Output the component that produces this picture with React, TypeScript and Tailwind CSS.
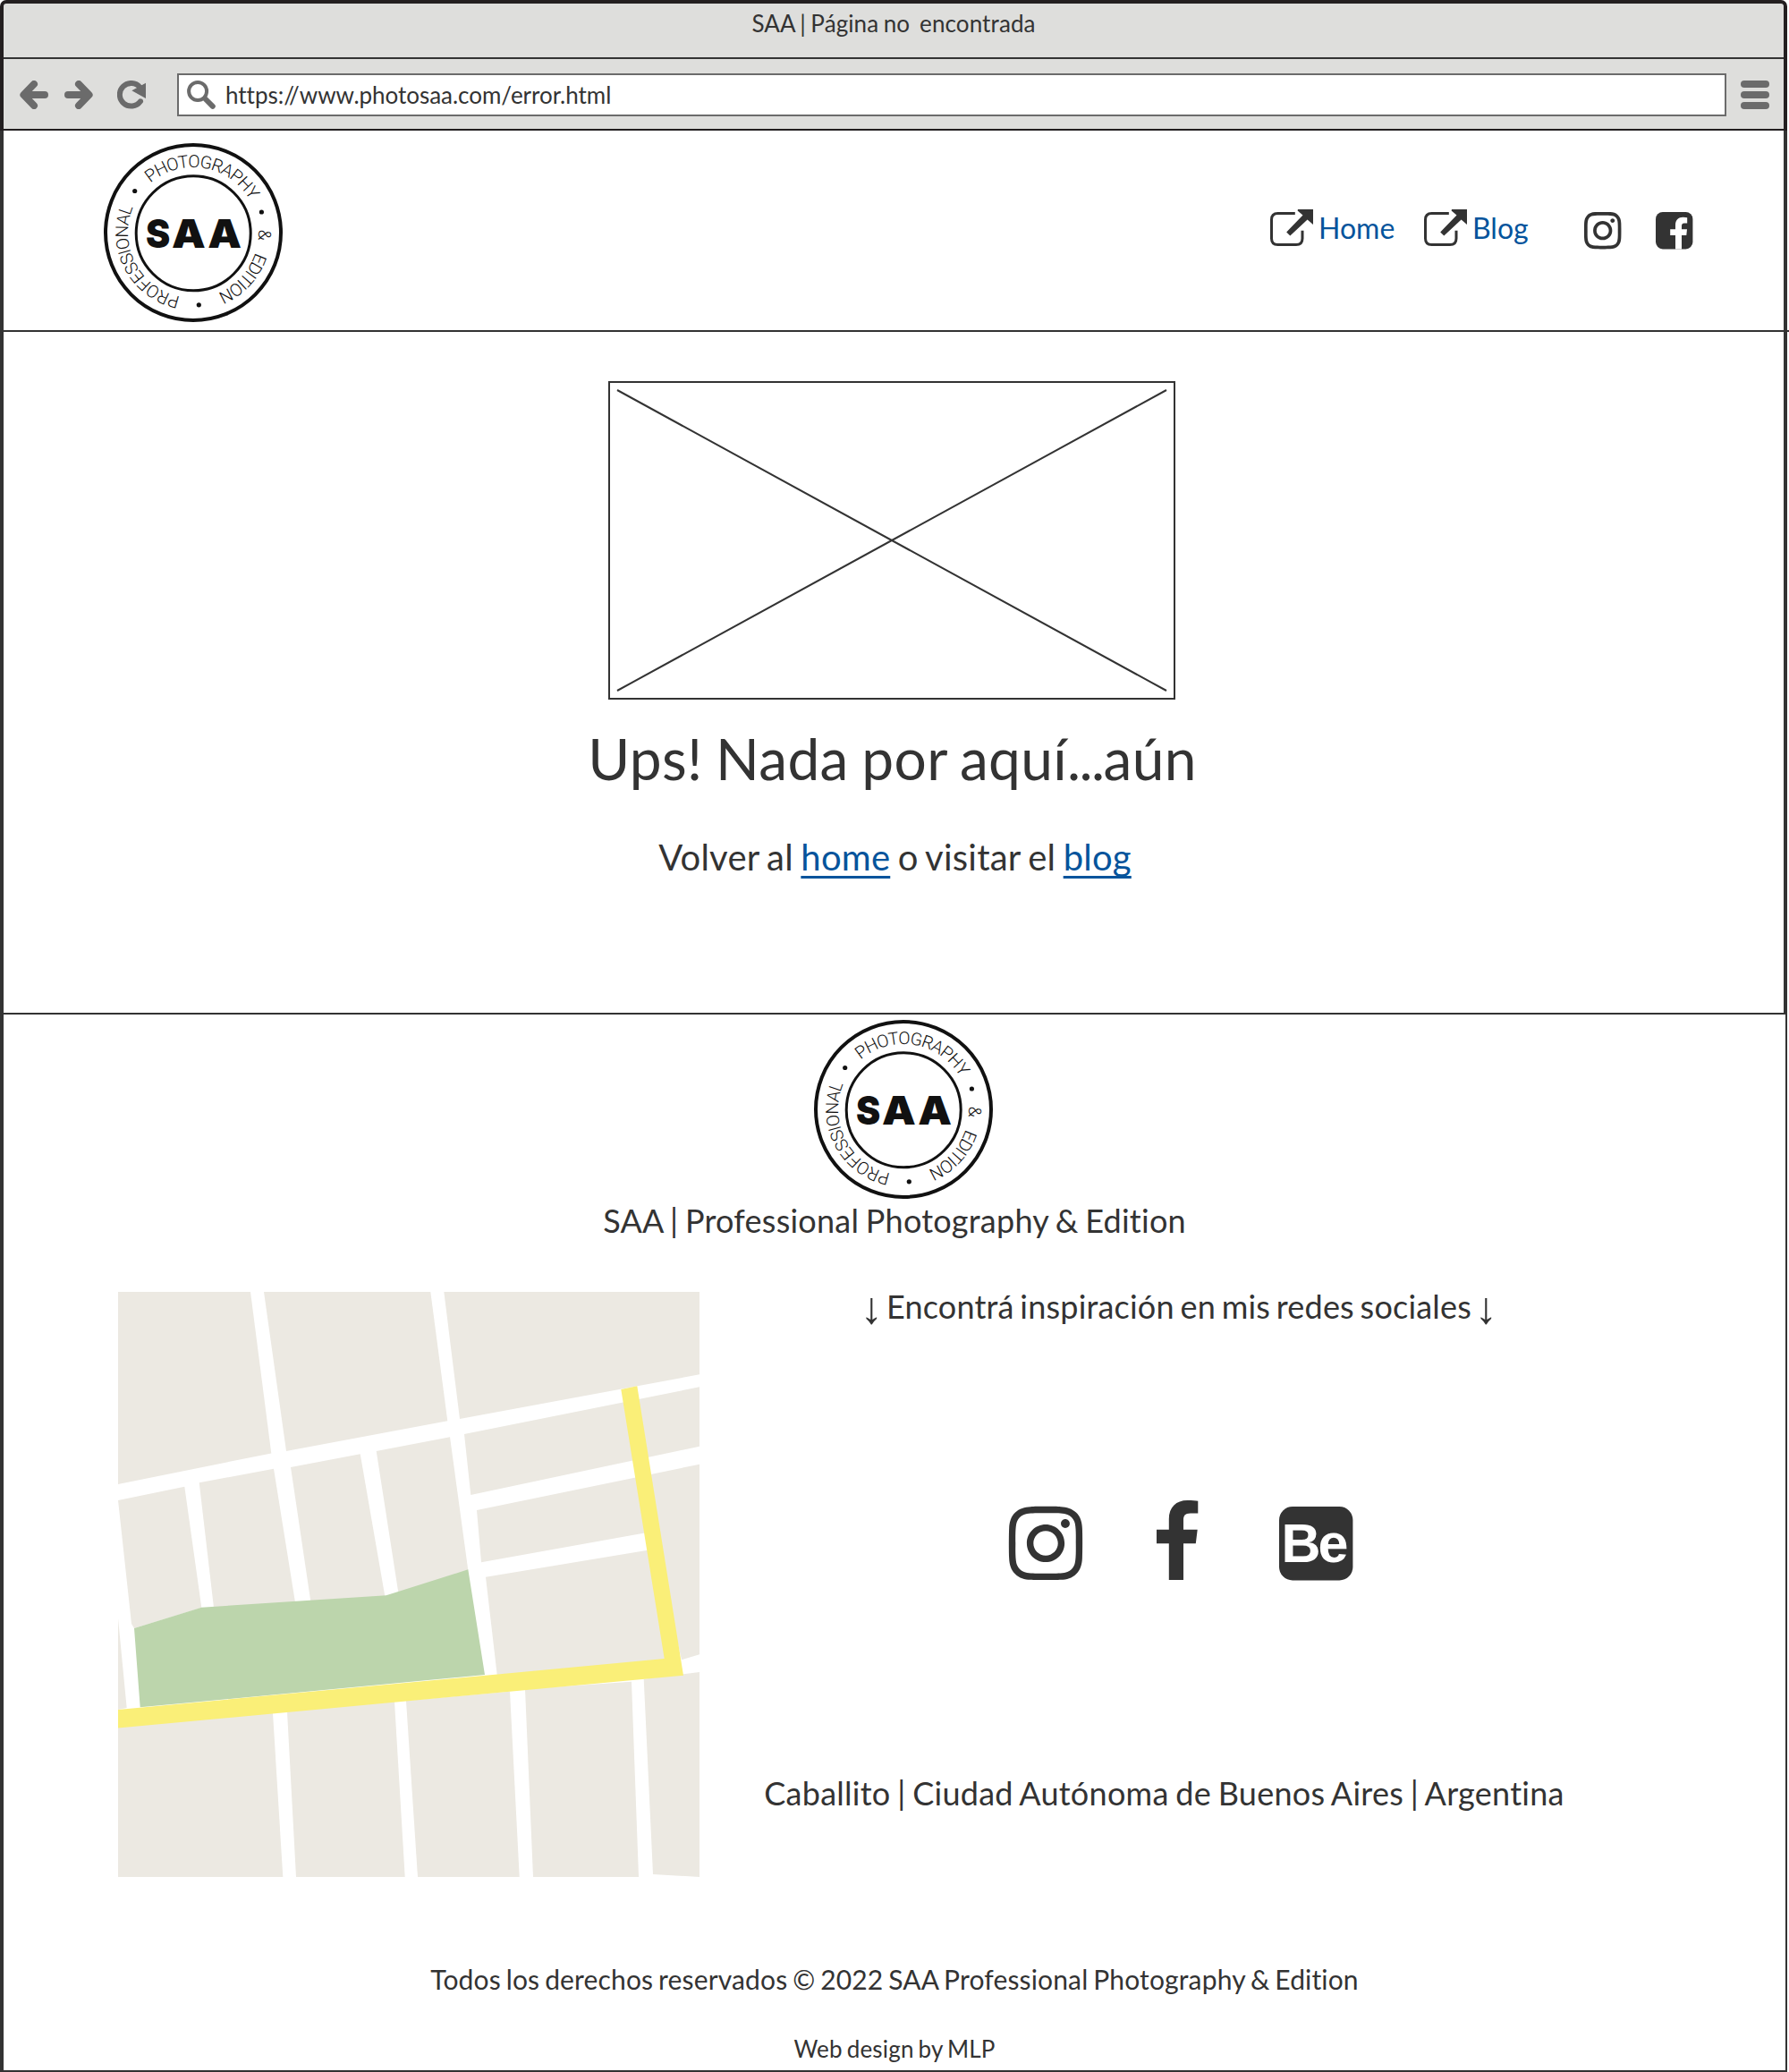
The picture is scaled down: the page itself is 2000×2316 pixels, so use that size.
import React, { useId } from "react";
import { FaInstagram } from "react-icons/fa";

function Badge() {
  const id = useId();
  const ringText = [
    { label: "PROFESSIONAL", start: 14.7, length: 129 },
    { label: "PHOTOGRAPHY", start: 177, length: 129 },
    { label: "&", start: 340, length: 11 },
    { label: "EDITION", start: 366, length: 64 },
  ];
  return (
    <svg width="200" height="200" viewBox="0 0 200 200" fill="none" className="block shrink-0">
      <circle cx="100" cy="100" r="98" stroke="#111" strokeWidth="4" />
      <circle cx="100.2" cy="100.8" r="64" stroke="#111" strokeWidth="3" />
      <path id={id} d="M100 173A73 73 0 0 1 100 27A73 73 0 0 1 100 173" />
      {ringText.map((t) => (
        <text key={t.label} fill="#111" className="font-['Roboto'] text-[19.5px] font-light">
          <textPath href={`#${id}`} startOffset={t.start} textLength={t.length} lengthAdjust="spacing">
            {t.label}
          </textPath>
        </text>
      ))}
      <circle cx="34.7" cy="53.5" r="2.6" fill="#111" />
      <circle cx="176.4" cy="77" r="2.6" fill="#111" />
      <circle cx="106.3" cy="180.8" r="2.6" fill="#111" />
      <g fill="#111" className="font-['Inter'] text-[44px] font-black">
        <text transform="translate(47 116.8) scale(0.93 1)">S</text>
        <text transform="translate(0 116.8) scale(1.08 1)" x="70.4 107.6">AA</text>
      </g>
    </svg>
  );
}

function ArrowIcon({ flip = false }: { flip?: boolean }) {
  return (
    <svg width="32" height="32" viewBox="0 0 32 32" className={flip ? "-scale-x-100" : ""}>
      <path d="M16 4L4.4 16L16 28L10 16Z" fill="#6b6b6b" />
      <path d="M16 4L4.4 16L16 28M6 16H28" fill="none" stroke="#6b6b6b" strokeWidth="8" strokeLinecap="round" strokeLinejoin="round" />
    </svg>
  );
}

function ReloadIcon() {
  return (
    <svg width="32" height="32" viewBox="0 0 32 32">
      <path d="M25.5 7.6A12.8 12.8 0 1 0 26 23.3" fill="none" stroke="#6b6b6b" strokeWidth="6" strokeLinecap="round" />
      <path d="M16.3 11.3L32 2.7V20Z" fill="#6b6b6b" />
    </svg>
  );
}

function SearchIcon() {
  return (
    <svg width="32" height="32" viewBox="0 0 32 32" fill="none" stroke="#6b6b6b">
      <circle cx="12.1" cy="12" r="10" strokeWidth="4" />
      <path d="M20.5 20.5L28.8 28.8" strokeWidth="6" strokeLinecap="round" />
    </svg>
  );
}

function ExternalIcon() {
  return (
    <svg width="49" height="42" viewBox="0 0 49 42">
      <path d="M27.8 4.6H8.5Q1.5 4.6 1.5 11.6V32.5Q1.5 39.5 8.5 39.5H29Q36 39.5 36 32.5V23.7" fill="none" stroke="#333" strokeWidth="3" />
      <path d="M31 0H48V17L41.6 11.4L22.3 29.6L18.2 25.4L36.5 6.4L30.6 1.4Z" fill="#333" />
    </svg>
  );
}

function FacebookSquare() {
  return (
    <svg width="42" height="42" viewBox="0 0 42 42">
      <rect width="41.4" height="41.4" rx="7.8" fill="#333" />
      <path d="M35.2 6.2V12.6H32C29.5 12.6 29 14 29 16V19.3H35L34.3 26H29V41.5H22V26H16.2V19.3H22V14.5C22 8.8 25.5 5.7 30.5 5.7Q33.5 5.7 35.2 6.2Z" fill="#fff" />
    </svg>
  );
}

function FacebookF() {
  return (
    <svg width="47" height="89" viewBox="0 0 47 89">
      <path d="M46.3 .7V14.5H38C31.5 14.5 30 17.5 30 22V32.8H45.7L43.8 48.2H30V89H13.8V48.2H0V32.8H13.8V21C13.8 7.5 22 0 34.3 0C39.5 0 44 .3 46.3 .7Z" fill="#333" />
    </svg>
  );
}

function BehanceSquare() {
  return (
    <svg width="83" height="83" viewBox="0 0 83 83">
      <rect width="82.4" height="82.4" rx="15" fill="#333" />
      <text x="2.4" y="62.3" textLength="75" lengthAdjust="spacing" fill="#fff" className="font-['Liberation_Sans'] text-[61px] font-bold">
        Be
      </text>
    </svg>
  );
}

const blocks = [
  "0,0 148,0 171.3,180.4 0,215",
  "163,0 349.3,0 368.3,144.3 188,178",
  "364.3,0 650,0 650,92.3 382,142",
  "0,233 74.3,217.7 93.3,353 18,376 15,371",
  "90.7,213.3 174,197.7 198,347 107,353",
  "193,196 270.7,181.3 298.3,340 215.3,346",
  "288.7,178 371,162.3 391.3,311 313.3,336",
  "0,365 9.7,465 0,467",
  "387,159 650,106.3 650,172.7 394.3,227",
  "401,244 650,192.7 650,405.3 630,411.3 597,268 406,302.3",
  "411,318.7 595,288.2 612,412 423.7,428",
  "0,486 173,470.7 184.3,654 0,654",
  "189,469 309,458 320.7,654 199,654",
  "322,457 438,446.7 448.7,654 335,654",
  "455,444 504.7,440.5 574,435.7 582,654 464,654",
  "587.7,432.7 650,425 650,654 598,651",
];

function StreetMap() {
  return (
    <svg width="650" height="654" viewBox="0 0 650 654" className="block shrink-0">
      {blocks.map((points) => (
        <polygon key={points} points={points} fill="#ece9e2" />
      ))}
      <polygon points="18,376 93.3,352.7 299.7,339.3 391.3,310.3 410,428 24.7,464.3" fill="#bcd5ac" />
      <polygon points="0,467 610.7,410 562.3,109 580.3,105.3 632,428.7 0,487.5" fill="#faef78" />
    </svg>
  );
}

function NavLink({ label }: { label: string }) {
  return (
    <a className="flex h-[42px] items-start">
      <ExternalIcon />
      <span className="ml-[5px] text-[32px] leading-[41px] text-[#05549c]">{label}</span>
    </a>
  );
}

function InlineLink({ label }: { label: string }) {
  return (
    <a className="text-[#05549c] underline decoration-[2.5px] underline-offset-[6px] [text-decoration-skip-ink:none]">{label}</a>
  );
}

function DownArrow() {
  return <span className="relative top-[5px] font-['Liberation_Serif'] text-[50px] leading-[44px]">↓</span>;
}

export default function App() {
  return (
    <div className="flex h-[2316px] w-[2000px] flex-col overflow-hidden bg-white font-['Lato',sans-serif] text-[#333] [font-variant-ligatures:none]">
      <div className="w-[1998px] rounded-t-[7px] border-x-4 border-t-4 border-[#231f20] bg-[#dededc]">
        <div className="flex h-[62px] justify-center border-b-2 border-[#333] pt-[6px]">
          <span className="text-[26px] leading-[32px] tracking-[0.004em] whitespace-pre [word-spacing:-0.05em]">SAA | Página no  encontrada</span>
        </div>
        <div className="flex h-[80px] items-center border-b-2 border-[#231f20] pt-[2px] pl-[18px] pr-4">
          <ArrowIcon />
          <div className="ml-[18px] flex"><ArrowIcon flip /></div>
          <div className="ml-[27px] flex"><ReloadIcon /></div>
          <div className="ml-[35px] flex h-[48px] grow items-center border-2 border-[#6b6b6b] bg-white pl-[9px]">
            <SearchIcon />
            <span className="ml-[11px] text-[26px] leading-[32px] tracking-[-0.001em]">https://www.photosaa.com/error.html</span>
          </div>
          <div className="ml-4 flex w-8 flex-col gap-1">
            <div className="h-2 rounded-full bg-[#6b6b6b]" />
            <div className="h-2 rounded-full bg-[#6b6b6b]" />
            <div className="h-2 rounded-full bg-[#6b6b6b]" />
          </div>
        </div>
      </div>

      <header className="flex h-[223px] w-[1998px] items-start border-x-4 border-[#333] pl-[112px] pt-[14px]">
        <Badge />
        <nav className="ml-[1104px] mt-[74px] flex items-start">
          <div className="w-[172px]"><NavLink label="Home" /></div>
          <div className="w-[176px]"><NavLink label="Blog" /></div>
          <div className="mt-[3px] flex w-[83px]">
            <FaInstagram className="-mt-[3px] h-[47.4px] w-[47.4px] shrink-0" />
          </div>
          <div className="mt-[3px]"><FacebookSquare /></div>
        </nav>
      </header>
      <div className="h-[2px] w-[2000px] shrink-0 bg-[#333]" />

      <main className="flex h-[761px] w-[1998px] flex-col items-center border-x-4 border-[#333] pt-[55px]">
        <svg width="634" height="356" viewBox="0 0 634 356" className="-ml-1 block shrink-0" fill="none" stroke="#333" strokeWidth="2">
          <rect x="1" y="1" width="632" height="354" />
          <path d="M10 10L624 346M624 10L10 346" />
        </svg>
        <h1 className="mt-[26px] -ml-[3px] text-[64px] leading-[80px] tracking-[0.0055em] [word-spacing:-0.035em]">
          Ups! Nada por aquí<span className="tracking-[-0.025em]">...</span>aún
        </h1>
        <p className="mt-[46px] ml-[3px] text-[40px] leading-[48px] tracking-[0.0055em] [word-spacing:-0.05em]">
          Volver al <InlineLink label="home" /> o visitar el <InlineLink label="blog" />
        </p>
      </main>

      <footer className="flex h-[1184px] w-[1998px] flex-col border-y-2 border-r-2 border-l-4 border-[#333]">
        <div className="flex flex-col pt-[6px]">
          <div className="ml-[906px]"><Badge /></div>
          <p className="mt-[2px] text-center text-[36px] leading-[44px] tracking-[0.0065em] [word-spacing:-0.05em]">SAA | Professional Photography &amp; Edition</p>
        </div>
        <div className="mt-[58px] flex pl-[128px]">
          <StreetMap />
          <div className="ml-[72px] flex w-[893px] flex-col items-center">
            <div className="ml-[35px] -mt-[9px] flex h-[44px] items-baseline gap-[4px] text-[36px] leading-[44px] whitespace-nowrap">
              <DownArrow />
              <p className="tracking-[0.0055em] [word-spacing:-0.075em]">Encontrá inspiración en mis redes sociales</p>
              <DownArrow />
            </div>
            <div className="mt-[198px] flex h-[90px] w-full items-start pl-[274px]">
              <FaInstagram className="-ml-[6px] mt-[1px] h-[94px] w-[94px] shrink-0" />
              <div className="ml-[77px]"><FacebookF /></div>
              <div className="ml-[90px] mt-[7px]"><BehanceSquare /></div>
            </div>
            <p className="mt-[215px] ml-[2px] text-[36px] leading-[44px] tracking-[0.0075em] whitespace-nowrap [word-spacing:-0.05em]">
              Caballito | Ciudad Autónoma de Buenos Aires | Argentina
            </p>
          </div>
        </div>
        <p className="mt-[95px] text-center text-[30px] leading-[38px] tracking-[0.005em] [word-spacing:-0.065em]">
          Todos los derechos reservados © 2022 SAA Professional Photography &amp; Edition
        </p>
        <p className="mt-[43px] text-center text-[26px] leading-[32px] tracking-[0.0065em] [word-spacing:-0.07em]">Web design by MLP</p>
      </footer>
    </div>
  );
}
